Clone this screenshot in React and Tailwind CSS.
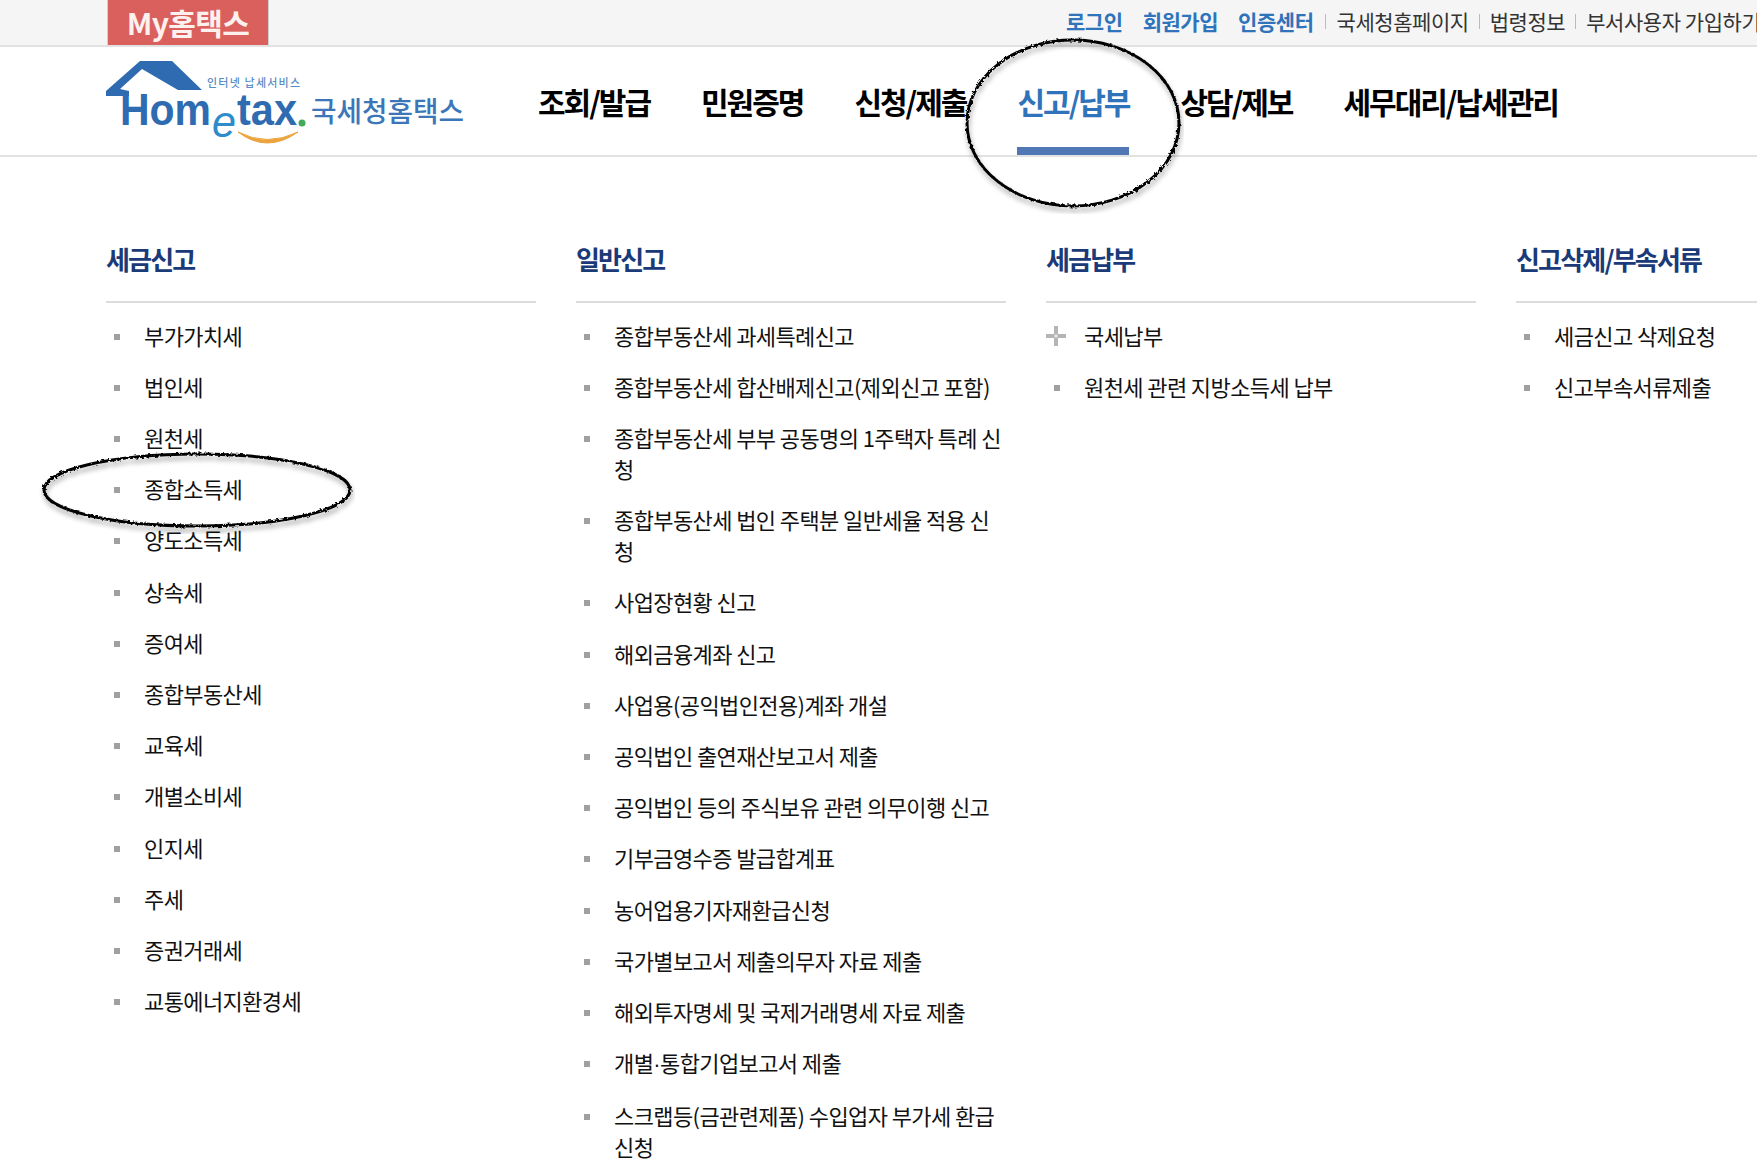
import React from "react";

const navItems = ["조회/발급", "민원증명", "신청/제출", "신고/납부", "상담/제보", "세무대리/납세관리"];

const columns = [
  {
    title: "세금신고",
    items: ["부가가치세", "법인세", "원천세", "종합소득세", "양도소득세", "상속세", "증여세", "종합부동산세", "교육세", "개별소비세", "인지세", "주세", "증권거래세", "교통에너지환경세"],
  },
  {
    title: "일반신고",
    items: [
      "종합부동산세 과세특례신고",
      "종합부동산세 합산배제신고(제외신고 포함)",
      "종합부동산세 부부 공동명의 1주택자 특례 신청",
      "종합부동산세 법인 주택분 일반세율 적용 신청",
      "사업장현황 신고",
      "해외금융계좌 신고",
      "사업용(공익법인전용)계좌 개설",
      "공익법인 출연재산보고서 제출",
      "공익법인 등의 주식보유 관련 의무이행 신고",
      "기부금영수증 발급합계표",
      "농어업용기자재환급신청",
      "국가별보고서 제출의무자 자료 제출",
      "해외투자명세 및 국제거래명세 자료 제출",
      <>개별<span className="font-['Liberation_Sans']">·</span>통합기업보고서 제출</>,
      "스크랩등(금관련제품) 수입업자 부가세 환급 신청",
    ],
  },
  { title: "세금납부", items: ["국세납부", "원천세 관련 지방소득세 납부"], plusFirst: true },
  { title: "신고삭제/부속서류", items: ["세금신고 삭제요청", "신고부속서류제출"] },
];

const Logo = () => (
  <svg width="362" height="96" viewBox="0 0 362 96" className="shrink-0">
    <path d="M1 36 L35 6 L67 6 L97 35 L73 35 L37 14 L15 34 L24 36 L24 41 L1 41 Z" fill="#2f6bb0" />
    <text x="15" y="70" fontFamily="Liberation Sans" fontWeight="700" fontSize="45" fill="#2f6bb0" textLength="91" lengthAdjust="spacingAndGlyphs">Hom</text>
    <text x="107" y="82" fontFamily="Liberation Sans" fontStyle="italic" fontSize="44" fill="#2f8ccb" textLength="24" lengthAdjust="spacingAndGlyphs">e</text>
    <text x="132" y="70" fontFamily="Liberation Sans" fontWeight="700" fontSize="44" fill="#2f6bb0" textLength="60" lengthAdjust="spacingAndGlyphs">tax</text>
    <circle cx="197" cy="68" r="3.5" fill="#45a95a" />
    <path d="M133 77 Q 162 99 193 77 Q 162 92 133 77 Z" fill="#eda33c" stroke="#eda33c" strokeWidth="1" />
    <text x="102" y="32" fontFamily="Noto Sans CJK KR" fontWeight="500" fontSize="11" fill="#5c8cc4" textLength="93">인터넷 납세서비스</text>
    <text x="206" y="67" fontFamily="Noto Sans CJK KR" fontWeight="500" fontSize="28" fill="#3b76b8" textLength="153" lengthAdjust="spacingAndGlyphs">국세청홈택스</text>
  </svg>
);

// 손으로 그린 듯한 검은 타원
const RoughEllipse = ({ id, className, width, height }) => (
  <svg width={width} height={height} className={className}>
    <defs>
      <filter id={id} x="-10%" y="-10%" width="120%" height="125%">
        <feTurbulence type="fractalNoise" baseFrequency="0.35" numOctaves="2" seed="4" result="noise" />
        <feDisplacementMap in="SourceGraphic" in2="noise" scale="3.5" result="rough" />
        <feDropShadow dx="1" dy="4" stdDeviation="2.5" floodColor="#000" floodOpacity="0.35" />
      </filter>
    </defs>
    <ellipse cx={width / 2} cy={height / 2 - 2} rx={width / 2 - 5} ry={height / 2 - 6} fill="none" stroke="#000" strokeWidth="3" filter={`url(#${id})`} />
  </svg>
);

const Column = ({ title, items, plusFirst }) => (
  <div className="w-[430px] shrink-0">
    <h3 className="h-[65px] border-b-2 border-[#dcdcdc] pt-[3px] text-[26px] leading-[36px] font-bold tracking-[-1.8px] text-[#1b3a78]">{title}</h3>
    <ul className="pt-[6.6px]">
      {items.map((item, i) => (
        <li key={i} className="flex py-[10.1px] text-[22px] leading-[31px] tracking-[-0.6px] text-[#111]">
          <span className="flex h-[31px] w-[38px] shrink-0 items-center">
            {plusFirst && i === 0 ? (
              <svg width="20" height="20" viewBox="0 0 20 20" className="mt-[2px]">
                <path d="M8 0h4v8h8v4h-8v8H8v-8H0V8h8z" fill="#b5b5b5" />
                <path d="M9.5 8h1v4h-1zM8 9.5h4v1H8z" fill="#f3f3f3" />
              </svg>
            ) : (
              <span className="mt-[3px] ml-[8px] block h-[6px] w-[6px] bg-[#a0a0a0]" />
            )}
          </span>
          <span className="min-w-0 flex-1 break-all">{item}</span>
        </li>
      ))}
    </ul>
  </div>
);

const App = () => {
  return (
    <div className="relative h-[1169px] w-[1757px] overflow-hidden bg-white font-['Noto_Sans_CJK_KR',sans-serif]">
      {/* Top bar */}
      <div className="flex h-[47px] items-stretch border-b-2 border-[#e2e2e2] bg-[#f5f5f5] pl-[107px] whitespace-nowrap">
        <div className="flex w-[162px] shrink-0 items-center justify-center border-x border-[#d0d0d0] bg-[#d9605c] text-[30px] font-bold tracking-[-0.6px] text-[#fdf0ef]">My홈택스</div>
        <div className="ml-[797px] flex items-center pb-[2px] text-[21px] tracking-[-0.45px] text-[#333]">
          <a className="font-bold text-[#2f73bb]">로그인</a>
          <a className="ml-[20px] font-bold text-[#2f73bb]">회원가입</a>
          <a className="ml-[20px] font-bold text-[#2f73bb]">인증센터</a>
          <span className="mx-[11px] h-[15px] w-px bg-[#bbb]" />
          <a>국세청홈페이지</a>
          <span className="mx-[10px] h-[15px] w-px bg-[#bbb]" />
          <a>법령정보</a>
          <span className="mx-[10px] h-[15px] w-px bg-[#bbb]" />
          <a>부서사용자 가입하기</a>
        </div>
      </div>

      {/* Header */}
      <div className="flex h-[110px] items-stretch border-b-2 border-[#e2e2e2] pl-[105px]">
        <div className="flex w-[433px] shrink-0 items-start pt-[8px]">
          <Logo />
        </div>
        <nav className="flex gap-[51px] whitespace-nowrap">
          {navItems.map((item) => (
            <a
              key={item}
              className={
                item === "신고/납부"
                  ? "flex items-center border-b-[8px] border-[#4f78b5] pt-[9px] text-[30px] font-bold tracking-[-2px] text-[#2f73bb]"
                  : "flex items-center border-b-[8px] border-transparent pt-[9px] text-[30px] font-bold tracking-[-2px] text-black"
              }
            >
              {item}
            </a>
          ))}
        </nav>
      </div>

      {/* Menu columns */}
      <div className="flex gap-[40px] pt-[81px] pl-[106px]">
        {columns.map((col) => (
          <Column key={col.title} {...col} />
        ))}
      </div>

      <RoughEllipse id="navCircle" className="pointer-events-none absolute top-[36px] left-[962px]" width={222} height={178} />
      <RoughEllipse id="itemCircle" className="pointer-events-none absolute top-[450px] left-[39px]" width={316} height={84} />
    </div>
  );
};

export default App;
